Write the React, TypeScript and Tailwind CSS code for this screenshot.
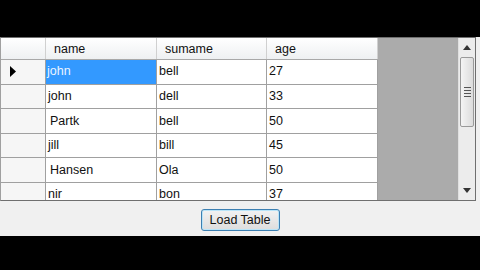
import React from 'react';

const rows = [
  ['john', 'bell', '27'],
  ['john', 'dell', '33'],
  ['Partk', 'bell', '50'],
  ['jill', 'bill', '45'],
  ['Hansen', 'Ola', '50'],
  ['nir', 'bon', '37'],
];

const widths = ['w-[111px]', 'w-[110px]', 'w-[111px]'];

export default function App() {
  return (
    <div className="w-[480px] h-[270px] bg-black flex flex-col overflow-hidden" style={{ fontFamily: '"Liberation Sans", Arial, sans-serif' }}>
      <div className="h-[37px] shrink-0" />
      <div className="bg-[#f0f0f0] h-[199px] shrink-0 flex flex-col">
        <div className="w-[476px] h-[164px] flex border border-[#6f6f6f] border-l-[#a0a0a0] overflow-hidden bg-white">
          <div className="w-[377px] shrink-0 flex flex-col">
            <div className="flex h-[22px] shrink-0 bg-gradient-to-b from-white to-[#eef0f2] border-b border-[#a8a8a8]">
              <div className="w-[45px] border-r border-[#d0d0d0]" />
              {['name', 'sumame', 'age'].map((h, i) => (
                <div key={h} className={`${widths[i]} border-r border-[#d0d0d0] pl-[8px] text-[12.5px] text-[#111] leading-[22px]`}>
                  {h}
                </div>
              ))}
            </div>
            {rows.map((r, ri) => (
              <div key={ri} className="flex h-[24.6px] shrink-0 border-b border-[#a0a0a0]">
                <div className="w-[45px] bg-[#f6f6f6] border-r border-[#a0a0a0] flex items-center pl-[9px]">
                  {ri === 0 && (
                    <svg width="6" height="11" viewBox="0 0 6 11">
                      <path d="M0 0 L6 5.5 L0 11 Z" fill="#000" />
                    </svg>
                  )}
                </div>
                {r.map((c, ci) => (
                  <div
                    key={ci}
                    className={`${widths[ci]} border-r border-[#a0a0a0] flex items-center text-[12.5px] ${
                      ri === 0 && ci === 0 ? 'bg-[#3399ff] text-[#eaf4ff] pl-[1px]' : 'text-[#111] pl-[2px]'
                    } ${ri === 2 && ci === 0 ? 'pl-[4px]' : ''} ${ri === 4 && ci === 0 ? 'pl-[4px]' : ''}`}
                  >
                    {c}
                  </div>
                ))}
              </div>
            ))}
          </div>
          <div className="flex-1 bg-[#ababab]" />
          <div className="w-[17px] shrink-0 bg-[#ececec] flex flex-col border-l border-[#e0e0e0]">
            <div className="h-[19px] flex items-center justify-center">
              <svg width="8" height="5" viewBox="0 0 8 5">
                <path d="M0 5 L4 0 L8 5 Z" fill="#333" />
              </svg>
            </div>
            <div className="mx-[1px] h-[70px] rounded-[2px] border border-[#9a9a9a] bg-gradient-to-r from-[#f4f4f4] to-[#dcdcdc] flex flex-col items-center justify-center gap-[2px]">
              <div className="w-[7px] h-[1px] bg-[#555]" />
              <div className="w-[7px] h-[1px] bg-[#555]" />
              <div className="w-[7px] h-[1px] bg-[#555]" />
              <div className="w-[7px] h-[1px] bg-[#555]" />
            </div>
            <div className="flex-1" />
            <div className="h-[19px] flex items-center justify-center">
              <svg width="8" height="5" viewBox="0 0 8 5">
                <path d="M0 0 L4 5 L8 0 Z" fill="#333" />
              </svg>
            </div>
          </div>
        </div>
        <div className="flex justify-center pt-[8px]">
          <button className="w-[79px] h-[22px] rounded-[3px] border border-[#3c7fb1] bg-gradient-to-b from-[#f2f2f2] to-[#dddddd] shadow-[inset_0_0_0_1px_#b9e4f8] text-[12.5px] text-[#111] leading-none">
            Load Table
          </button>
        </div>
      </div>
      <div className="flex-1" />
    </div>
  );
}
